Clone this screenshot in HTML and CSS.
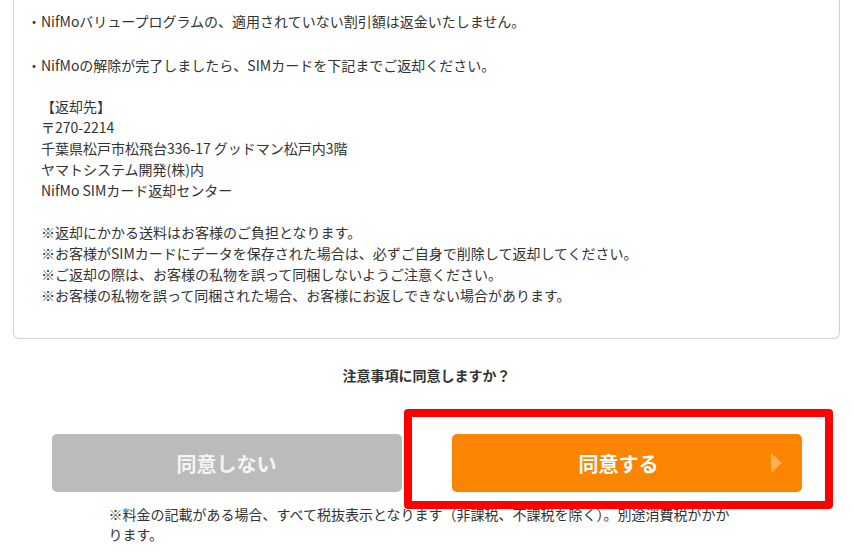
FILE: index.html
```html
<!DOCTYPE html>
<html lang="ja">
<head>
  <meta charset="UTF-8" />
  <meta name="viewport" content="width=device-width, initial-scale=1.0" />
  <title>NifMo 解除手続き</title>
  <link rel="stylesheet" href="styles.css">
</head>
<body>
  <div class="page">
    <div class="notice-box">
      <p class="notice-item first">・NifMoバリュープログラムの、適用されていない割引額は返金いたしません。</p>
      <p class="notice-item second">・NifMoの解除が完了しましたら、SIMカードを下記までご返却ください。</p>
      <div class="return-address">
        【返却先】<br>
        〒270-2214<br>
        千葉県松戸市松飛台336-17 グッドマン松戸内3階<br>
        ヤマトシステム開発(株)内<br>
        NifMo SIMカード返却センター
      </div>
      <div class="return-notes">
        ※返却にかかる送料はお客様のご負担となります。<br>
        ※お客様がSIMカードにデータを保存された場合は、必ずご自身で削除して返却してください。<br>
        ※ご返却の際は、お客様の私物を誤って同梱しないようご注意ください。<br>
        ※お客様の私物を誤って同梱された場合、お客様にお返しできない場合があります。
      </div>
    </div>

    <p class="question">注意事項に同意しますか？</p>

    <div class="actions">
      <a class="btn btn-decline" href="#">同意しない</a>
      <div class="agree-wrap">
        <a class="btn btn-agree" href="#">同意する<span class="btn-arrow"></span></a>
        <div class="highlight"></div>
      </div>
    </div>

    <p class="tax-note">※料金の記載がある場合、すべて税抜表示となります（非課税、不課税を除く）。別途消費税がかかります。</p>
  </div>
</body>
</html>
```

FILE: styles.css
```css
html, body {
  margin: 0;
  background: #fff;
  color: #333;
  font-family: "Noto Sans CJK JP", "Noto Sans", sans-serif;
  font-size: 14px;
  line-height: 21px;
  overflow: hidden;
}
.page {
  padding: 0 13px;
}
.notice-box {
  border: 1px solid #d2d2d2;
  border-top: none;
  border-radius: 0 0 6px 6px;
  padding: 11px 13px 32px;
}
.notice-item {
  margin: 0;
}
.notice-item.first {
  margin-bottom: 23px;
}
.notice-item.second {
  margin-bottom: 20px;
}
.return-address {
  padding-left: 14px;
  margin-bottom: 21px;
}
.return-notes {
  padding-left: 14px;
}
.question {
  margin: 26px 0 0;
  text-align: center;
  font-weight: bold;
}
.actions {
  display: flex;
  justify-content: center;
  gap: 50px;
  margin-top: 48px;
}
.agree-wrap {
  position: relative;
}
.btn {
  position: relative;
  display: flex;
  align-items: center;
  justify-content: center;
  box-sizing: border-box;
  width: 350px;
  height: 58px;
  border-radius: 5px;
  font-size: 20px;
  font-weight: bold;
  color: #fff;
  text-decoration: none;
}
.btn-decline {
  background: #bbbbbb;
  color: #f4f4f4;
}
.btn-agree {
  background: #fb8500;
  padding-right: 16px;
}
.btn-arrow {
  position: absolute;
  right: 20px;
  top: 19px;
  width: 0;
  height: 0;
  border-top: 10px solid transparent;
  border-bottom: 10px solid transparent;
  border-left: 11px solid rgba(255, 255, 255, 0.35);
}
/* red highlight around the agree button */
.highlight {
  position: absolute;
  top: -25px;
  left: -48px;
  right: -31px;
  bottom: -17px;
  border: 8px solid #ff0000;
  border-radius: 4px;
  z-index: 2;
  pointer-events: none;
}
.tax-note {
  box-sizing: border-box;
  width: 636px;
  padding-right: 12px;
  margin: 12px auto 0;
  line-height: 20px;
}
```
